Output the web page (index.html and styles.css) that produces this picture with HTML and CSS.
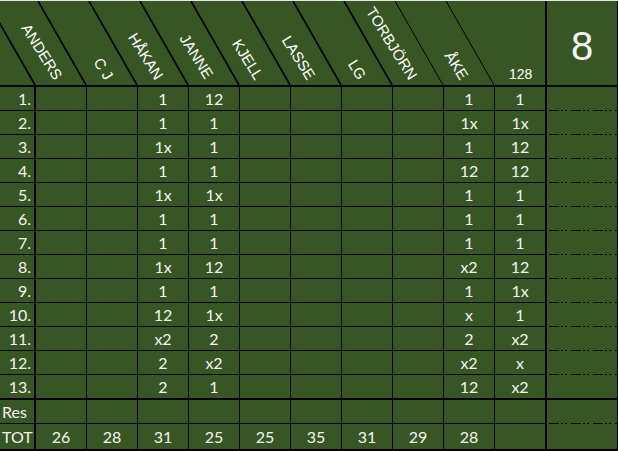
FILE: index.html
```html
<!DOCTYPE html>
<html lang="sv">
<head>
<meta charset="utf-8">
<title>Tips</title>
<link rel="stylesheet" href="styles.css">
</head>
<body>
<div class="sheet">
  <div class="hdr">
    <svg class="hdr-art" width="545" height="84" viewBox="0 0 545 84">
      <g stroke="#000" stroke-width="1.7">
        <line x1="-13" y1="0" x2="35" y2="84"/>
        <line x1="38" y1="0" x2="86" y2="84"/>
        <line x1="89" y1="0" x2="137" y2="84"/>
        <line x1="140" y1="0" x2="188" y2="84"/>
        <line x1="191" y1="0" x2="239" y2="84"/>
        <line x1="242" y1="0" x2="290" y2="84"/>
        <line x1="293" y1="0" x2="341" y2="84"/>
        <line x1="344" y1="0" x2="392" y2="84"/>
      </g>
      <g stroke="#000" stroke-width="1">
        <line x1="395" y1="0" x2="443" y2="84"/>
        <line x1="446" y1="0" x2="494" y2="84"/>
      </g>
      <g class="names" fill="#fff" text-anchor="end">
        <text transform="translate(54 80) rotate(58)">ANDERS</text>
        <text transform="translate(105 80) rotate(58)">C J</text>
        <text transform="translate(155 80) rotate(58)">HÅKAN</text>
        <text transform="translate(205 79) rotate(58)">JANNE</text>
        <text transform="translate(255 80) rotate(58)">KJELL</text>
        <text transform="translate(307 80) rotate(58)">LASSE</text>
        <text transform="translate(358 80) rotate(58)">LG</text>
        <text transform="translate(409 80) rotate(58)">TORBJÖRN</text>
        <text transform="translate(460 80) rotate(58)">ÅKE</text>
      </g>
      <text class="num128" x="509" y="78" fill="#fff">128</text>
    </svg>
  </div>
  <div class="big">8</div>

  <div class="lbl">1.</div><div class="c"></div><div class="c"></div><div class="c">1</div><div class="c">12</div><div class="c"></div><div class="c"></div><div class="c"></div><div class="c"></div><div class="c">1</div><div class="c c128">1</div><div class="side"></div>
  <div class="lbl">2.</div><div class="c"></div><div class="c"></div><div class="c">1</div><div class="c">1</div><div class="c"></div><div class="c"></div><div class="c"></div><div class="c"></div><div class="c">1x</div><div class="c c128">1x</div><div class="side"></div>
  <div class="lbl">3.</div><div class="c"></div><div class="c"></div><div class="c">1x</div><div class="c">1</div><div class="c"></div><div class="c"></div><div class="c"></div><div class="c"></div><div class="c">1</div><div class="c c128">12</div><div class="side"></div>
  <div class="lbl">4.</div><div class="c"></div><div class="c"></div><div class="c">1</div><div class="c">1</div><div class="c"></div><div class="c"></div><div class="c"></div><div class="c"></div><div class="c">12</div><div class="c c128">12</div><div class="side"></div>
  <div class="lbl">5.</div><div class="c"></div><div class="c"></div><div class="c">1x</div><div class="c">1x</div><div class="c"></div><div class="c"></div><div class="c"></div><div class="c"></div><div class="c">1</div><div class="c c128">1</div><div class="side"></div>
  <div class="lbl">6.</div><div class="c"></div><div class="c"></div><div class="c">1</div><div class="c">1</div><div class="c"></div><div class="c"></div><div class="c"></div><div class="c"></div><div class="c">1</div><div class="c c128">1</div><div class="side"></div>
  <div class="lbl">7.</div><div class="c"></div><div class="c"></div><div class="c">1</div><div class="c">1</div><div class="c"></div><div class="c"></div><div class="c"></div><div class="c"></div><div class="c">1</div><div class="c c128">1</div><div class="side"></div>
  <div class="lbl">8.</div><div class="c"></div><div class="c"></div><div class="c">1x</div><div class="c">12</div><div class="c"></div><div class="c"></div><div class="c"></div><div class="c"></div><div class="c">x2</div><div class="c c128">12</div><div class="side"></div>
  <div class="lbl">9.</div><div class="c"></div><div class="c"></div><div class="c">1</div><div class="c">1</div><div class="c"></div><div class="c"></div><div class="c"></div><div class="c"></div><div class="c">1</div><div class="c c128">1x</div><div class="side"></div>
  <div class="lbl">10.</div><div class="c"></div><div class="c"></div><div class="c">12</div><div class="c">1x</div><div class="c"></div><div class="c"></div><div class="c"></div><div class="c"></div><div class="c">x</div><div class="c c128">1</div><div class="side"></div>
  <div class="lbl">11.</div><div class="c"></div><div class="c"></div><div class="c">x2</div><div class="c">2</div><div class="c"></div><div class="c"></div><div class="c"></div><div class="c"></div><div class="c">2</div><div class="c c128">x2</div><div class="side"></div>
  <div class="lbl">12.</div><div class="c"></div><div class="c"></div><div class="c">2</div><div class="c">x2</div><div class="c"></div><div class="c"></div><div class="c"></div><div class="c"></div><div class="c">x2</div><div class="c c128">x</div><div class="side"></div>
  <div class="lbl r13">13.</div><div class="c r13"></div><div class="c r13"></div><div class="c r13">2</div><div class="c r13">1</div><div class="c r13"></div><div class="c r13"></div><div class="c r13"></div><div class="c r13"></div><div class="c r13">12</div><div class="c c128 r13">x2</div><div class="side side-solid r13"></div>

  <div class="lbl lbl-left">Res</div><div class="c"></div><div class="c"></div><div class="c"></div><div class="c"></div><div class="c"></div><div class="c"></div><div class="c"></div><div class="c"></div><div class="c"></div><div class="c c128"></div><div class="side"></div>
  <div class="lbl lbl-left tot">TOT</div><div class="c tot">26</div><div class="c tot">28</div><div class="c tot">31</div><div class="c tot">25</div><div class="c tot">25</div><div class="c tot">35</div><div class="c tot">31</div><div class="c tot">29</div><div class="c tot">28</div><div class="c c128 tot"></div><div class="side side-solid tot"></div>
</div>
</body>
</html>
```

FILE: styles.css
```css
* { box-sizing: border-box; }

html, body {
  margin: 0;
  padding: 0;
  background: #e6e6e6;
}

.sheet {
  margin-top: 1px;
  width: 618px;
  display: grid;
  grid-template-columns: 36px repeat(9, 51px) 52px 71px;
  grid-template-rows: 86px repeat(12, 24px) 25px 24px 27px;
  background: #375623;
  color: #f4f4f4;
  font-family: Lato, "Open Sans", sans-serif;
  font-size: 16px;
}

.hdr {
  grid-column: 1 / 12;
  border-right: 2px solid #000;
  border-bottom: 2px solid #000;
  overflow: hidden;
}

.hdr-art {
  display: block;
}

.names text {
  font-family: "Liberation Sans", Arial, sans-serif;
  font-size: 15px;
}

.num128 {
  font-family: "Liberation Sans", Arial, sans-serif;
  font-size: 14px;
}

.big {
  border-right: 1px solid #000;
  border-bottom: 2px solid #000;
  display: flex;
  align-items: center;
  justify-content: center;
  padding-top: 6px;
  font-family: "Liberation Sans", Arial, sans-serif;
  font-size: 40px;
}

.lbl, .c, .side {
  border-bottom: 1px solid #000;
  display: flex;
  align-items: flex-end;
  padding-bottom: 2px;
  line-height: 19px;
}

.lbl {
  border-right: 2px solid #000;
  justify-content: flex-end;
  padding-right: 3px;
}

.lbl-left {
  justify-content: flex-start;
  padding-left: 2px;
  padding-right: 0;
}

.c {
  border-right: 1px solid #000;
  justify-content: center;
}

.c128 {
  border-right: 2px solid #000;
}

.side {
  border-right: 1px solid #000;
  border-bottom: none;
  background-image: repeating-linear-gradient(90deg,
    transparent 0 2px,
    #000 2px 12px,
    transparent 12px 14px,
    #000 14px 16px,
    transparent 16px 18px,
    #000 18px 20px,
    transparent 20px 22px);
  background-size: 100% 1px;
  background-position: left bottom;
  background-repeat: no-repeat;
}

.side-solid {
  background-image: none;
}

.r13 {
  border-bottom: 2px solid #000;
}

.tot {
  border-bottom: 2px solid #000;
  padding-bottom: 3px;
}
```
